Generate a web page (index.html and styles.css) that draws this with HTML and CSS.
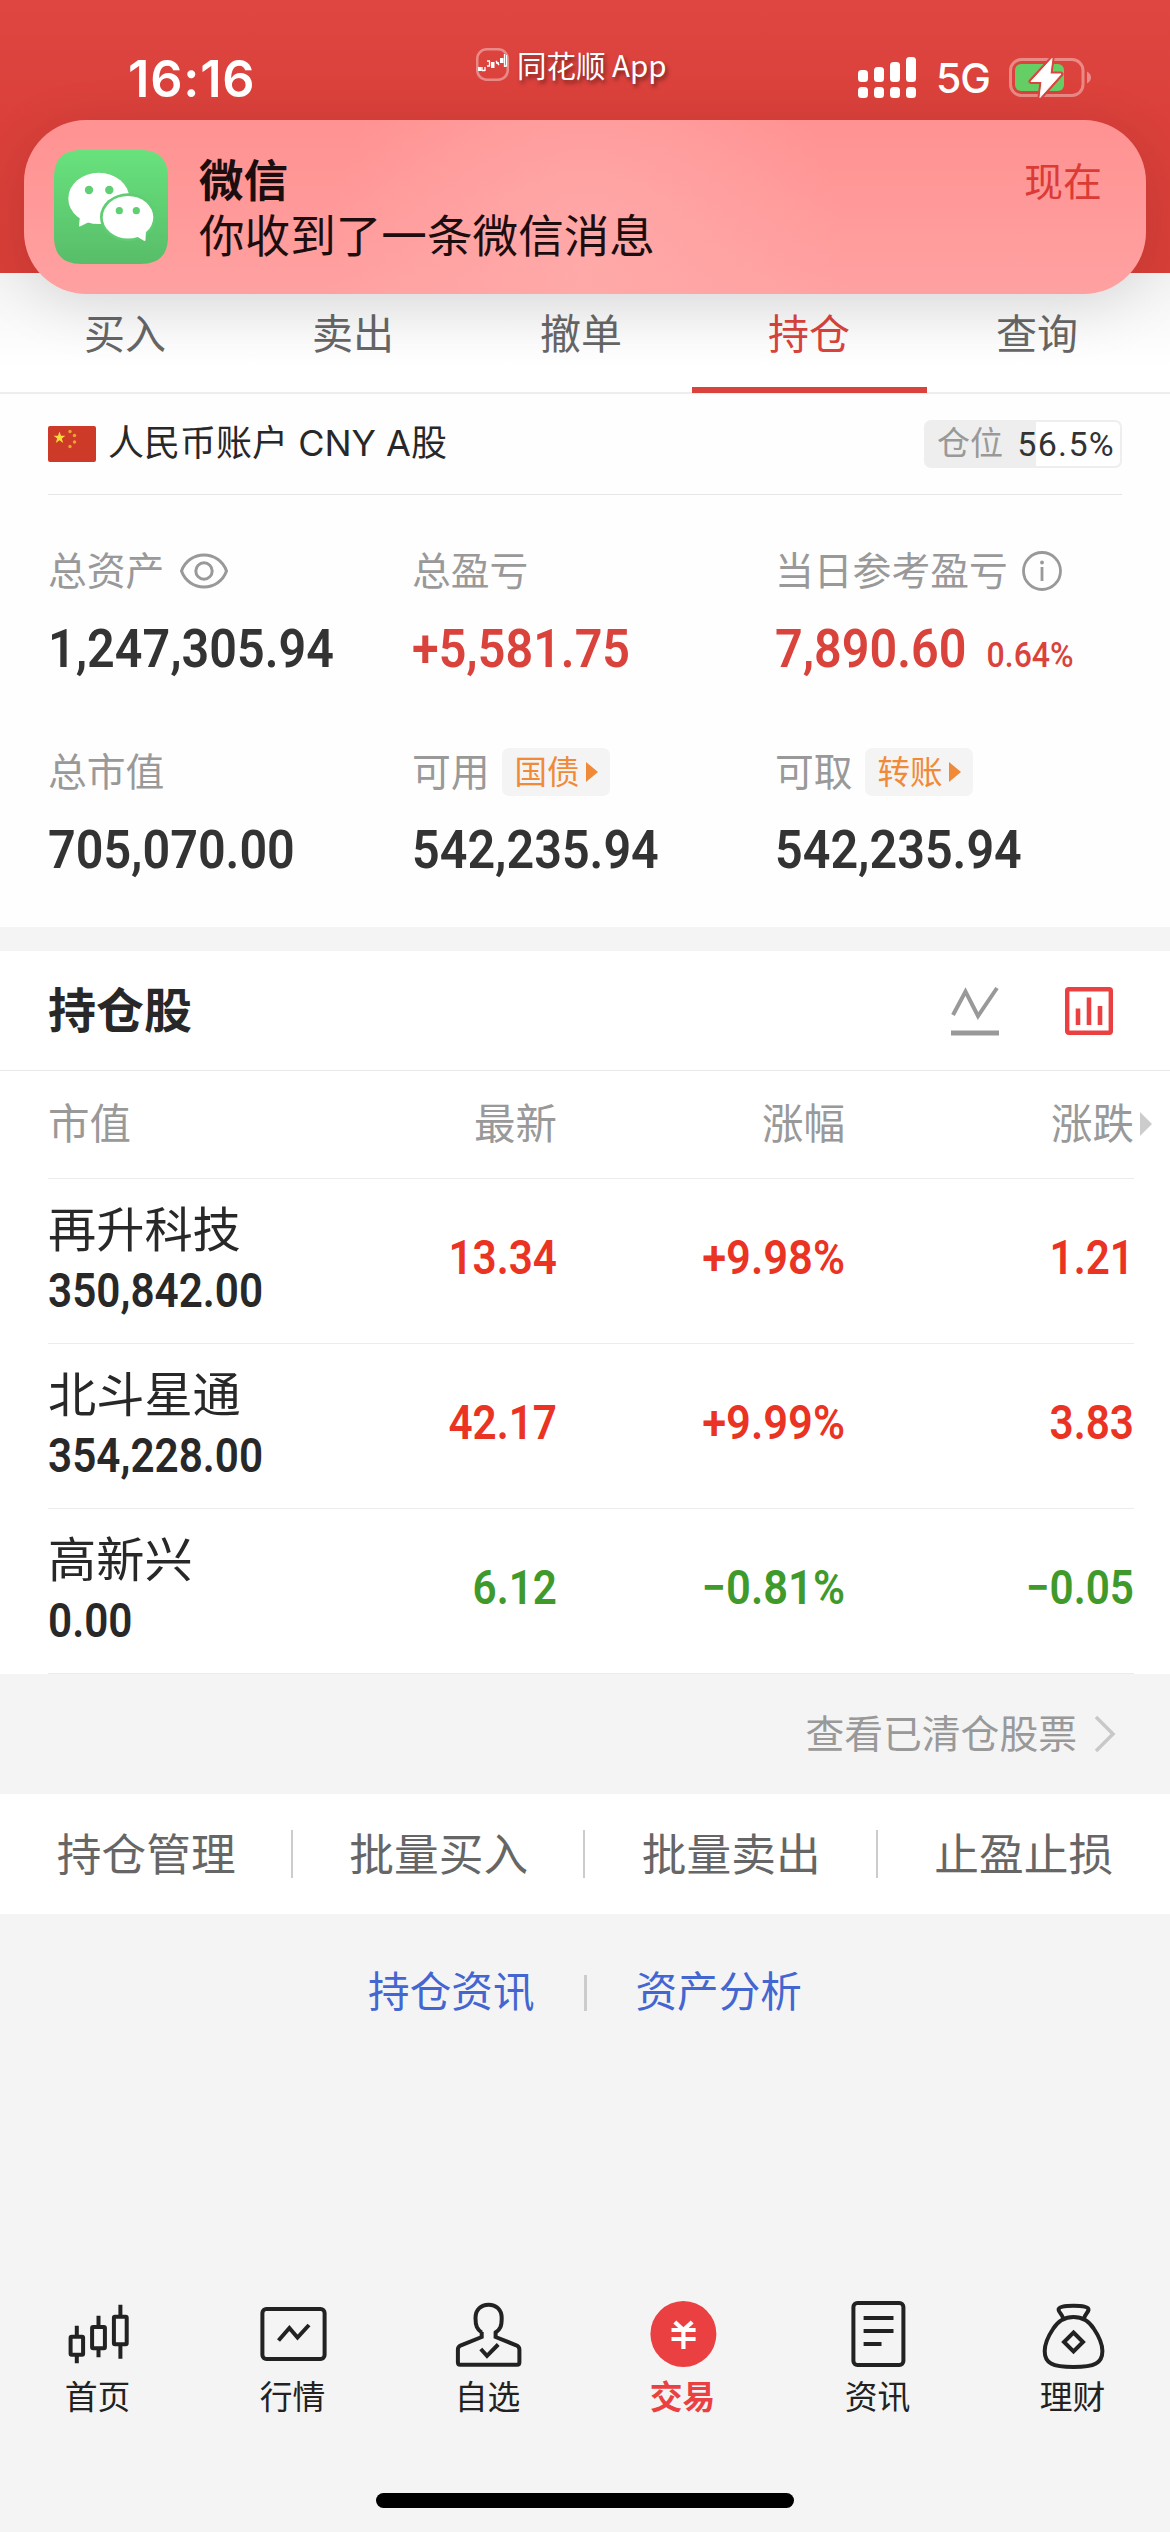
FILE: index.html
```html
<!DOCTYPE html>
<html lang="zh-CN">
<head>
<meta charset="utf-8">
<title>持仓</title>
<link rel="stylesheet" href="styles.css">
</head>
<body>
<div class="screen">
  <header class="topbar">
    <div class="clock">16:16</div>
    <div class="appname">
      <svg width="33" height="33" viewBox="0 0 33 33" fill="none">
        <rect x="1.25" y="1.25" width="30.5" height="30.5" rx="9.5" stroke="#fff" stroke-opacity=".38" stroke-width="2.5"/>
        <path d="M6 19v4M9 19v4M6 22.500h3M11 13h3M13.500 13v5M11 18h3M20 13l3 4M20 15h3M28.500 6v13M28.500 18h2V7" stroke="#fff" stroke-width="1.300"/>
        <path d="M2 19h3.500v4H2zM15 14h3.500v6H15zM24 10h3.500v5H24z" fill="#fff"/>
      </svg>
      <span>同花顺 App</span>
    </div>
    <div class="signals">
      <svg width="58" height="42" viewBox="0 0 58 42" fill="#fff">
        <rect x="0" y="13" width="10" height="12" rx="3.500"/><rect x="16" y="10" width="10" height="15" rx="3.500"/><rect x="32" y="5" width="10" height="20" rx="3.500"/><rect x="48" y="0" width="10" height="25" rx="3.500"/>
        <rect x="0" y="30" width="10" height="11" rx="3.500"/><rect x="16" y="30" width="10" height="11" rx="3.500"/><rect x="32" y="30" width="10" height="11" rx="3.500"/><rect x="48" y="30" width="10" height="11" rx="3.500"/>
      </svg>
      <span class="net">5G</span>
      <svg width="82" height="42" viewBox="0 0 82 42">
        <rect x="1.500" y="2.500" width="72.500" height="36" rx="11" fill="none" stroke="#fff" stroke-opacity=".38" stroke-width="3"/>
        <rect x="6" y="7" width="49" height="27" rx="6" fill="#65cf65"/>
        <path d="M78 14.500q4 2.500 4 6t-4 6z" fill="#fff" fill-opacity=".4"/>
        <path d="M43 1.500L22 24.500H33L31 40.500L52 17H41Z" fill="#fff" stroke="#dc443e" stroke-width="5" stroke-linejoin="round"/>
        <path d="M43 1.500L22 24.500H33L31 40.500L52 17H41Z" fill="#fff" stroke="#fff" stroke-width="1" stroke-linejoin="round"/>
      </svg>
    </div>
    <div class="banner">
      <svg width="114" height="114" viewBox="0 0 114 114">
        <defs><linearGradient id="wx" x1="0" y1="0" x2="0" y2="1"><stop offset="0" stop-color="#68e27d"/><stop offset="1" stop-color="#58bd69"/></linearGradient></defs>
        <path d="M28 0H86C105 0 114 9 114 28V86C114 105 105 114 86 114H28C9 114 0 105 0 86V28C0 9 9 0 28 0Z" fill="url(#wx)"/>
        <ellipse cx="44.800" cy="48.400" rx="30.500" ry="25.700" fill="#fff"/>
        <path d="M26 66L25 75.500Q25 77 27 76L37 71Z" fill="#fff"/>
        <ellipse cx="74" cy="67.300" rx="28" ry="24" fill="#5fcd71"/>
        <ellipse cx="74" cy="67.300" rx="25.300" ry="21.300" fill="#fff"/>
        <path d="M92 80L91.500 90Q91.300 91.600 89.500 90.500L82 86Z" fill="#fff"/>
        <g fill="#5fd072"><circle cx="35" cy="40" r="4.200"/><circle cx="55.300" cy="40" r="4.200"/><circle cx="65.300" cy="60.700" r="3.600"/><circle cx="82.300" cy="60.700" r="3.600"/></g>
      </svg>
      <div class="banner-text">
        <div class="banner-title">微信</div>
        <div>你收到了一条微信消息</div>
      </div>
      <div class="banner-time">现在</div>
    </div>
  </header>

  <nav class="tabs">
    <div class="tab">买入</div><div class="tab">卖出</div><div class="tab">撤单</div><div class="tab active">持仓</div><div class="tab">查询</div>
  </nav>

  <section class="account">
    <div class="account-head">
      <svg width="48" height="36" viewBox="0 0 48 36">
        <rect width="48" height="36" rx="2" fill="#cd3a28"/>
        <path d="M11.500 5.500l1.500 4.300h4.400l-3.600 2.700 1.400 4.400-3.700-2.700-3.700 2.700 1.400-4.400-3.600-2.700H10z" fill="#f8dc3c"/>
        <g fill="#e8a733"><circle cx="22" cy="5.500" r="1.700"/><circle cx="26.500" cy="9.500" r="1.700"/><circle cx="26.500" cy="16" r="1.700"/><circle cx="22" cy="20.500" r="1.700"/></g>
      </svg>
      <span class="account-name">人民币账户 CNY A股</span>
      <div class="position"><span class="position-label">仓位</span><span class="position-value">56.5%</span></div>
    </div>
    <div class="stats">
      <div class="stat">
        <div class="label">总资产
          <svg class="eye" width="48" height="36" viewBox="0 0 48 36" fill="none" stroke="#999" stroke-width="3"><path d="M1.500 18C9-3.200 39-3.200 46.500 18C39 39.200 9 39.200 1.500 18Z"/><circle cx="24" cy="18" r="8.200"/></svg>
        </div>
        <div class="num">1,247,305.94</div>
      </div>
      <div class="stat"><div class="label">总盈亏</div><div class="num up">+5,581.75</div></div>
      <div class="stat">
        <div class="label">当日参考盈亏
          <svg class="info" width="42" height="42" viewBox="0 0 42 42" fill="none" stroke="#999" stroke-width="2.800"><circle cx="21" cy="21" r="18.500"/><path d="M21 17v14"/><circle cx="21" cy="12.500" r="1.900" fill="#999" stroke="none"/></svg>
        </div>
        <div class="num up">7,890.60<small>0.64%</small></div>
      </div>
      <div class="stat"><div class="label">总市值</div><div class="num">705,070.00</div></div>
      <div class="stat"><div class="label">可用<span class="chip">国债<i></i></span></div><div class="num">542,235.94</div></div>
      <div class="stat"><div class="label">可取<span class="chip">转账<i></i></span></div><div class="num">542,235.94</div></div>
    </div>
  </section>

  <section class="holdings">
    <div class="holdings-head">
      <h2>持仓股</h2>
      <svg width="48" height="50" viewBox="0 0 48 50" fill="none" stroke="#999"><path d="M2 29L14.500 5.500L27 30L46 2" stroke-width="4"/><path d="M0 47H48" stroke-width="5"/></svg>
      <svg width="48" height="50" viewBox="0 0 48 50" fill="none" stroke="#eb4042"><rect x="2.200" y="3.200" width="43.600" height="43.600" rx="1.500" stroke-width="4.400"/><path d="M13 22.500V39M24 11.500V39M35 20V39" stroke-width="4.600"/></svg>
    </div>
    <div class="table">
      <div class="row thead"><div>市值</div><div>最新</div><div>涨幅</div><div class="more">涨跌</div></div>
      <div class="row"><div><div class="name">再升科技</div><div class="amount">350,842.00</div></div><div class="q">13.34</div><div class="q pct">+9.98%</div><div class="q">1.21</div></div>
      <div class="row"><div><div class="name">北斗星通</div><div class="amount">354,228.00</div></div><div class="q">42.17</div><div class="q pct">+9.99%</div><div class="q">3.83</div></div>
      <div class="row down"><div><div class="name">高新兴</div><div class="amount">0.00</div></div><div class="q">6.12</div><div class="q pct">−0.81%</div><div class="q">−0.05</div></div>
    </div>
  </section>

  <div class="cleared">查看已清仓股票
    <svg width="22" height="38" viewBox="0 0 22 38" fill="none" stroke="#c8c8c8" stroke-width="3.500"><path d="M2 2L19 19L2 36"/></svg>
  </div>
  <div class="actions"><div>持仓管理</div><div>批量买入</div><div>批量卖出</div><div>止盈止损</div></div>
  <div class="links"><span>持仓资讯</span><b></b><span>资产分析</span></div>

  <footer class="bottom">
    <nav class="nav">
      <div class="nav-item"><svg viewBox="0 0 72 72"><rect x="8.600" y="38.700" width="12.500" height="18" rx="1"/><path d="M14.800 27.700V37M14.800 58V65.300M36.500 17.700V27M36.500 52V59.300M58.400 6.700V17M58.400 48V60.700"/><rect x="30.100" y="29" width="12.800" height="21.300" rx="1"/><rect x="51.900" y="18.700" width="12.800" height="27.600" rx="1"/></svg>首页</div>
      <div class="nav-item"><svg viewBox="0 0 72 72"><rect x="5.400" y="11" width="62.200" height="50" rx="4"/><path d="M21.500 42.500L32.400 30L40.500 39.500L52 27"/></svg>行情</div>
      <div class="nav-item"><svg viewBox="0 0 72 72"><path d="M29.700 34V39L9 47.300Q5.900 48.700 5.900 51.500V64.200Q5.900 66.700 8.300 66.700H65Q67.400 66.700 67.400 64.200V51.500Q67.400 48.700 64.300 47.300L43.600 39V34.500C48.500 31 49.700 28 49.700 20C49.700 11.500 44 6.700 36.600 6.700S23.500 11.500 23.500 20C23.500 28 25 31 29.700 34.500"/><path d="M28.800 51L35 57.800L46.200 46.500"/></svg>自选</div>
      <div class="nav-item on"><svg viewBox="0 0 72 72"><circle cx="36.400" cy="36" r="33" fill="#eb4042" stroke="none"/><path d="M24.500 32H48.600M24.500 41H48.600M36.400 31V51M27.800 24L36.400 32L45.200 24" stroke="#fff" stroke-width="4.200"/></svg>交易</div>
      <div class="nav-item"><svg viewBox="0 0 72 72"><rect x="11.400" y="5" width="50" height="62" rx="4"/><path d="M21.600 20H51.500M21.600 33H51.500M21.600 46H39.500"/></svg>资讯</div>
      <div class="nav-item"><svg viewBox="0 0 72 72"><path d="M36.500 19C46 19 52 23 57 31C61 37 65.400 44 65.400 53C65.400 65 58 69 36.500 69S7.700 65 7.700 53C7.700 44 12 37 16 31C21 23 27 19 36.500 19Z"/><path d="M26.500 21C25 16 22 14.500 21.600 12C21 8.500 28 7.800 36.500 7.800S52 8.500 51.500 12C51 14.500 48 16 46.800 21"/><path d="M36.500 34.500L46 44L36.500 53.500L27 44Z"/></svg>理财</div>
    </nav>
    <div class="home-indicator"></div>
  </footer>
</div>
</body>
</html>
```
FILE: styles.css
```css
* { box-sizing: border-box; }
body {
  margin: 0;
  font-family: Inter, "Noto Sans CJK SC", sans-serif;
  line-height: 1.2;
  color: #282828;
  background: #f4f4f4;
}
svg { display: block; flex: none; }

.screen {
  width: 1170px;
  height: 2532px;
  display: flex;
  flex-direction: column;
  overflow: hidden;
}

/* status bar */
.topbar {
  position: relative;
  z-index: 1;
  height: 273px;
  flex: none;
  display: grid;
  grid-template-columns: 348px auto 1fr;
  align-items: start;
  padding: 40px 79px 0 128px;
  background: linear-gradient(#df4641, #db403a 45%, #d93f38);
  color: #fff;
}
.clock { font-size: 50.5px; font-weight: 600; line-height: 77px; letter-spacing: .8px; }
.appname {
  display: flex;
  align-items: center;
  gap: 8px;
  margin-top: 2px;
  font-family: "Noto Sans CJK SC", sans-serif;
  font-size: 29.5px;
  line-height: 44px;
  text-shadow: 2px 3px 4px rgba(0, 0, 0, .5);
}
.signals { display: flex; justify-content: flex-end; align-items: center; padding-top: 17px; line-height: 42px; }
.net { font-size: 41px; font-weight: 500; margin: 0 19px 0 20px; letter-spacing: -1px; }

/* notification */
.banner {
  position: absolute;
  left: 24px;
  top: 120px;
  width: 1122px;
  height: 174px;
  padding: 30px 44px 30px 30px;
  border-radius: 62px;
  display: flex;
  background: radial-gradient(ellipse 260px 300px at 50% 90%, #ffa9a9, rgba(255, 169, 169, 0)), linear-gradient(#ff9292, #ffa1a1);
  box-shadow: 0 12px 60px rgba(0, 0, 0, .12);
  color: #1c0d0e;
  font-size: 45.6px;
  line-height: 55px;
}
.banner-text { margin: 4px 0 0 31px; flex: 1; }
.banner-title { font-weight: 700; font-size: 44.5px; }
.banner-time { font-size: 39px; color: #dc3b35; margin-top: 4px; }

/* tabs */
.tabs {
  height: 121px;
  flex: none;
  display: flex;
  padding: 0 19px 0 11px;
  background: linear-gradient(#f4f4f4, #fff 95px);
  border-bottom: 2px solid #eee;
}
.tab {
  flex: 1;
  position: relative;
  text-align: center;
  font-size: 41px;
  line-height: 122px;
  color: #666;
}
.tab.active { color: #d9433c; }
.tab.active::after {
  content: "";
  position: absolute;
  left: -3px;
  right: -4px;
  bottom: -1px;
  height: 6px;
  background: #d9433c;
}

/* account summary */
.account { height: 533px; flex: none; background: #fefefe; padding: 0 48px; }
.account-head {
  height: 101px;
  display: flex;
  align-items: center;
  border-bottom: 1px solid #e6e6e6;
}
.account-name { font-size: 36px; margin-left: 12px; flex: 1; }
.position {
  width: 198px;
  height: 48px;
  border: 2px solid #eee;
  border-radius: 7px;
  background: linear-gradient(90deg, #eee 56.5%, #fff 56.5%);
  display: flex;
  align-items: center;
  justify-content: space-between;
  padding: 0 5px 0 11px;
}
.position-label { font-size: 33px; color: #999; }
.position-value { font-family: Roboto, sans-serif; font-size: 34px; letter-spacing: 1.3px; padding-top: 1px; color: #333; }
.stats {
  display: grid;
  grid-template-columns: 364px 363px 1fr;
  grid-auto-rows: 201px;
  padding-top: 47px;
}
.label {
  display: flex;
  align-items: center;
  height: 58px;
  font-size: 38.8px;
  color: #999;
  white-space: nowrap;
}
.eye { margin-left: 16px; }
.info { margin-left: 13px; }
.chip {
  display: flex;
  align-items: center;
  width: 108px;
  height: 48px;
  margin-left: 12px;
  padding-left: 13px;
  border-radius: 7px;
  background: #f4f4f4;
  color: #f08a38;
  font-size: 32.5px;
}
.chip i {
  margin-left: 6px;
  border: 10px solid transparent;
  border-left: 12px solid #f08a38;
  border-right: 0;
}
.num {
  font-family: Roboto, sans-serif;
  font-weight: 600;
  font-size: 53px;
  line-height: 60px;
  margin-top: 19px;
  color: #333;
  white-space: nowrap;
  transform: scaleX(.915);
  transform-origin: left;
}
.num small { font-size: 35px; font-weight: 500; margin-left: 22px; }
.up { color: #d9433c; }

/* holdings */
.holdings { margin-top: 24px; background: #fff; flex: none; height: 723px; }
.holdings-head {
  height: 120px;
  display: flex;
  align-items: center;
  padding: 0 57px 0 48px;
  gap: 66px;
  border-bottom: 1px solid #e8e8e8;
}
h2 { margin: 0; flex: 1; font-size: 48px; font-weight: 700; }
.table { padding: 0 36px 0 48px; }
.row {
  height: 165px;
  display: grid;
  grid-template-columns: 222px 287px 288px 289px;
  align-items: center;
  padding-right: 1px;
  border-bottom: 1px solid #ececec;
  text-align: right;
}
.row > :first-child { text-align: left; white-space: nowrap; }
.thead { height: 108px; font-size: 41.5px; color: #999; }
.more { position: relative; }
.more::after {
  content: "";
  position: absolute;
  left: 295px;
  top: 50%;
  margin-top: -12px;
  border: 12px solid transparent;
  border-left-color: #ccc;
  border-right: 0;
}
.name { font-size: 48.2px; line-height: 62px; }
.amount, .q {
  font-family: Roboto, sans-serif;
  font-weight: 600;
  font-size: 47.5px;
  transform: scaleX(.89);
}
.amount { line-height: 60px; padding-bottom: 2px; transform-origin: left; }
.q { color: #ea3323; transform-origin: right; padding-bottom: 5px; }
.pct { transform: scaleX(.915); }
.down .q { color: #3f9a2b; }

/* below the table */
.cleared {
  height: 120px;
  flex: none;
  display: flex;
  align-items: center;
  justify-content: flex-end;
  gap: 17px;
  padding-right: 54px;
  font-size: 38.8px;
  color: #999;
}
.actions {
  height: 120px;
  flex: none;
  display: grid;
  grid-template-columns: repeat(4, 1fr);
  align-items: center;
  background: #fff;
  text-align: center;
  font-size: 44.7px;
  color: #666;
}
.actions div { line-height: 46px; padding-top: 2px; }
.actions div + div { box-shadow: -2px 0 #ccc; }
.links {
  flex: none;
  display: flex;
  justify-content: center;
  align-items: center;
  gap: 49px;
  margin-top: 49px;
  height: 60px;
  font-size: 41.6px;
  color: #4466d0;
}
.links b { width: 3px; height: 36px; background: #ccc; }

/* bottom navigation */
.bottom { margin-top: auto; height: 234px; flex: none; }
.nav { display: grid; grid-template-columns: repeat(6, 195px); height: 195px; }
.nav-item {
  display: flex;
  flex-direction: column;
  align-items: center;
  font-size: 32.8px;
  line-height: 54px;
  color: #222;
}
.nav-item svg { width: 72px; height: 72px; fill: none; stroke: #222; stroke-width: 4; }
.nav-item.on { color: #eb4042; font-weight: 700; }
.home-indicator { width: 418px; height: 15px; margin: 0 auto; border-radius: 8px; background: #000; }
```
